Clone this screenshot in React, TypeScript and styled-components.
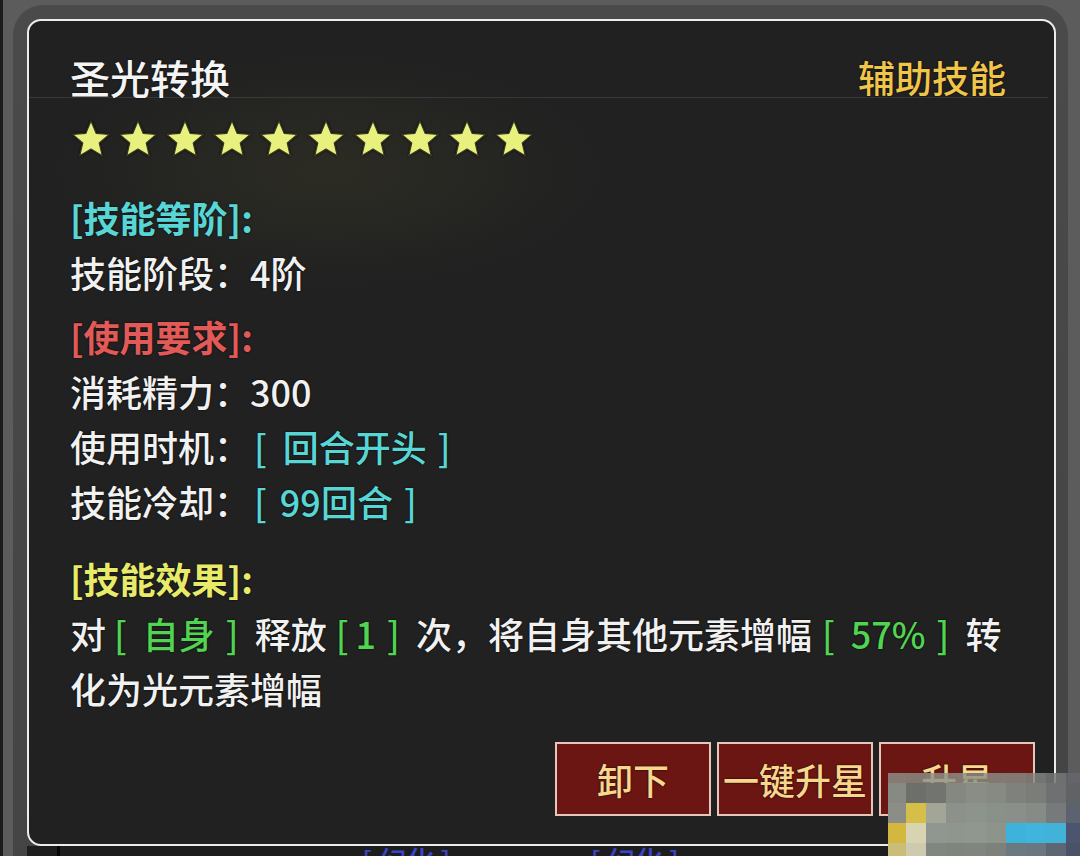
import React from "react";
import styled, { createGlobalStyle } from "styled-components";

const GlobalStyle = createGlobalStyle`
  html, body {
    margin: 0;
    padding: 0;
    background: #5c5c5c;
    overflow: hidden;
  }
  body {
    font-family: "Noto Sans CJK SC", "Noto Sans", sans-serif;
  }
`;

const FONT = `"Noto Sans CJK SC", "Noto Sans", sans-serif`;

const Screen = styled.div`
  position: relative;
  width: 1080px;
  height: 856px;
  box-sizing: border-box;
  border-left: 3px solid #1c1c1c;
  padding: 5px 12px 0 10px;
  overflow: hidden;
  background: #5c5c5c;
`;

const Frame = styled.div`
  height: 100%;
  box-sizing: border-box;
  background: linear-gradient(180deg, #4a4a4a, #444444);
  border-radius: 30px 30px 0 0;
  padding: 14px 12px 0 14px;
  display: flex;
  flex-direction: column;
`;

const Panel = styled.div`
  height: 827px;
  flex: none;
  box-sizing: border-box;
  border: 2px solid #ececec;
  border-radius: 14px;
  background:
    radial-gradient(ellipse 360px 150px at 300px 150px, rgba(70, 68, 42, 0.3), rgba(70, 68, 42, 0) 75%),
    #212121;
  display: flex;
  flex-direction: column;
  overflow: hidden;
`;

const Header = styled.div`
  display: flex;
  justify-content: space-between;
  align-items: flex-end;
  padding: 36px 42px 0 41px;
  margin-right: 6px;
  border-bottom: 1px solid #383838;
`;

const Title = styled.div`
  font-family: ${FONT};
  font-size: 40px;
  line-height: 40px;
  font-weight: 500;
  color: #f4f4f4;
  text-shadow: 0 0 2px #000;
`;

const Tag = styled.div`
  font-family: ${FONT};
  font-size: 37px;
  line-height: 40px;
  font-weight: 500;
  color: #f0c54a;
  text-shadow: 0 0 2px #000;
`;

const Stars = styled.div`
  display: flex;
  gap: 7px;
  margin-top: 21px;
  padding-left: 42px;
`;

const StarIcon = styled.svg`
  width: 40px;
  height: 40px;
  display: block;
  filter: drop-shadow(0 0 1px rgba(0, 0, 0, 0.8));
`;

const Body = styled.div`
  flex: 1;
  padding: 31px 30px 0 41px;
`;

const Section = styled.div<{ $gap: number }>`
  margin-top: ${(p) => p.$gap}px;
`;

const Heading = styled.div<{ $color: string }>`
  font-family: ${FONT};
  font-size: 36px;
  line-height: 55px;
  font-weight: 700;
  color: ${(p) => p.$color};
  text-shadow: 0 0 2px #000;
`;

const Line = styled.div`
  font-family: ${FONT};
  font-size: 36px;
  line-height: 55px;
  font-weight: 500;
  color: #f1f1f1;
  text-shadow: 0 0 2px #000;
`;

const Hl = styled.span<{ $color: string; $lead: number }>`
  color: ${(p) => p.$color};
  margin: 0 16px 0 ${(p) => p.$lead}px;
`;

const HlInner = styled.span<{ $in?: number }>`
  margin: 0 11px 0 ${(p) => p.$in ?? 16}px;
`;

const ButtonRow = styled.div`
  display: flex;
  justify-content: flex-end;
  gap: 6px;
  padding: 0 19px 28px 0;
`;

const ActionButton = styled.button`
  width: 156px;
  height: 74px;
  box-sizing: border-box;
  border: 2px solid #e4c6bd;
  border-radius: 0;
  background: #6b1612;
  color: #f7d68e;
  font-family: ${FONT};
  font-size: 36px;
  font-weight: 500;
  padding: 0;
  display: flex;
  align-items: center;
  justify-content: center;
  white-space: nowrap;
  text-shadow: 0 0 2px #000;
  cursor: pointer;
`;

const Underlay = styled.div`
  flex: 1;
  background: #1d1d1d;
  display: flex;
  overflow: hidden;
  padding-left: 30px;
`;

const Notch = styled.div`
  width: 3px;
  background: #050505;
  margin-right: 302px;
`;

const BlueText = styled.div<{ $gap: number }>`
  font-family: ${FONT};
  font-size: 28px;
  line-height: 28px;
  font-weight: 500;
  color: #3b45c6;
  margin-right: ${(p) => p.$gap}px;
  white-space: nowrap;
`;

/* pixelated censor block over the lower right corner */
const Mosaic = styled.div`
  position: absolute;
  left: 885px;
  top: 773px;
  width: 195px;
  height: 83px;
  display: grid;
  grid-template-columns: 18px repeat(8, 20px) 17px;
  grid-template-rows: 10px 20px 20px 20px 13px;
`;

const Cell = styled.div<{ $bg: string }>`
  background: ${(p) => p.$bg};
`;

const mosaicColors: string[] = [
  "rgba(140,144,136,0.82)", "rgba(138,142,134,0.82)", "rgba(142,146,138,0.82)", "rgba(140,144,136,0.82)", "rgba(140,144,136,0.82)",
  "rgba(138,142,136,0.82)", "rgba(136,140,134,0.82)", "rgba(132,136,130,0.82)", "rgba(118,120,120,0.85)", "rgba(100,102,108,0.85)",
  "#868a82", "#6d706a", "#72756f", "#858880", "#8a8d86", "#878a83", "#7f827c", "#7a7d78", "#6f7072", "#606266",
  "#8b8e87", "#d6bf48", "#a3a596", "#8c918a", "#8d948c", "#8a9189", "#8a9089", "#868b86", "#767a7a", "#5d6270",
  "#d3b73e", "#d8d3b1", "#909790", "#8e968e", "#8f978f", "#8c948c", "#3db2da", "#3fb4dc", "#42b2d8", "#4b5570",
  "#c9bd78", "#cdcab0", "#80877f", "#7e857d", "#80867e", "#7c827b", "#6a7a80", "#6a7680", "#5e6674", "#4a5268",
];

/* five-point star, outer radius 11.5, inner radius 5.2 */
const Star = () => (
  <StarIcon viewBox="0 0 24 24">
    <path
      d="M12 1.2 L15.06 8.59 L22.94 9.25 L16.95 14.41 L18.76 22.1 L12 18.0 L5.24 22.1 L7.05 14.41 L1.06 9.25 L8.94 8.59 Z"
      fill="#e8f07e"
      stroke="#3a3a22"
      strokeWidth="0.7"
      strokeLinejoin="round"
    />
  </StarIcon>
);

const CYAN = "#58d6d6";
const RED = "#e25a58";
const YELLOW = "#e8ea6a";
const GREEN = "#52d452";

export default function App() {
  return (
    <>
      <GlobalStyle />
      <Screen>
        <Frame>
          <Panel>
            <Header>
              <Title>圣光转换</Title>
              <Tag>辅助技能</Tag>
            </Header>
            <Stars>
              {Array.from({ length: 10 }, (_, i) => (
                <Star key={i} />
              ))}
            </Stars>
            <Body>
              <Section $gap={0}>
                <Heading $color={CYAN}>[技能等阶]:</Heading>
                <Line>技能阶段：4阶</Line>
              </Section>
              <Section $gap={9}>
                <Heading $color={RED}>[使用要求]:</Heading>
                <Line>消耗精力：300</Line>
                <Line>
                  使用时机：
                  <Hl $color={CYAN} $lead={4}>
                    [<HlInner>回合开头</HlInner>]
                  </Hl>
                </Line>
                <Line>
                  技能冷却：
                  <Hl $color={CYAN} $lead={4}>
                    [<HlInner $in={13}>99回合</HlInner>]
                  </Hl>
                </Line>
              </Section>
              <Section $gap={22}>
                <Heading $color={YELLOW}>[技能效果]:</Heading>
                <Line>
                  对
                  <Hl $color={GREEN} $lead={8}>
                    [<HlInner>自身</HlInner>]
                  </Hl>
                  释放
                  <Hl $color={GREEN} $lead={9}>
                    [<HlInner $in={7}>1</HlInner>]
                  </Hl>
                  次，将自身其他元素增幅
                  <Hl $color={GREEN} $lead={10}>
                    [<HlInner $in={16}>57%</HlInner>]
                  </Hl>
                  转化为光元素增幅
                </Line>
              </Section>
            </Body>
            <ButtonRow>
              <ActionButton>卸下</ActionButton>
              <ActionButton>一键升星</ActionButton>
              <ActionButton>升星</ActionButton>
            </ButtonRow>
          </Panel>
          <Underlay>
            <Notch />
            <BlueText $gap={140}>[ 幻化 ]</BlueText>
            <BlueText $gap={0}>[ 幻化 ]</BlueText>
          </Underlay>
        </Frame>
        <Mosaic>
          {mosaicColors.map((c, i) => (
            <Cell key={i} $bg={c} />
          ))}
        </Mosaic>
      </Screen>
    </>
  );
}
